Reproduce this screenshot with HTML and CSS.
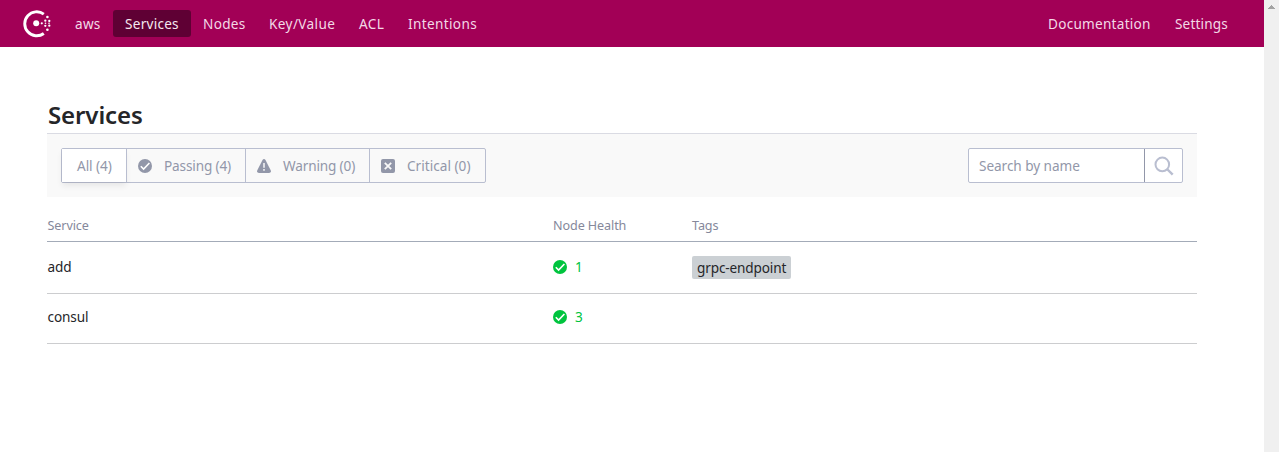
FILE: index.html
```html
<!DOCTYPE html>
<html lang="en">
<head>
<meta charset="utf-8">
<title>Services - Consul</title>
<link rel="stylesheet" href="styles.css">
</head>
<body>
<svg class="sprite" aria-hidden="true">
  <symbol id="check" viewBox="0 0 14 14"><circle cx="7" cy="7" r="7" fill="currentColor"/><path d="M2.8 7.2 5.6 10 11.4 4" fill="none" stroke="#fff" stroke-width="1.6"/></symbol>
</svg>
<div class="app">
  <div class="page">
    <header class="topbar">
      <a class="logo" href="#"><svg width="28" height="28" viewBox="0 0 28 28"><path d="M20.8 4.1A12 12 0 1 0 20.8 23.5" fill="none" stroke="#fff" stroke-width="2.9"/><g fill="#fff"><circle cx="13.2" cy="13.3" r="3"/><circle cx="18.8" cy="13.3" r="1.1"/><circle cx="22.3" cy="10.7" r="1.15"/><circle cx="22.3" cy="15.8" r="1.15"/><circle cx="22.5" cy="13.3" r=".8"/><circle cx="24.4" cy="7" r="1.3"/><circle cx="24.4" cy="19.7" r="1.3"/><circle cx="26.3" cy="11" r="1.15"/><circle cx="26.3" cy="15.7" r="1.15"/><circle cx="26" cy="13.3" r=".8"/></g></svg></a>
      <nav class="menu">
        <a class="link dc" href="#">aws</a>
        <a class="link services active" href="#">Services</a>
        <a class="link nodes" href="#">Nodes</a>
        <a class="link kv" href="#">Key/Value</a>
        <a class="link acl" href="#">ACL</a>
        <a class="link intentions" href="#">Intentions</a>
      </nav>
      <nav class="menu secondary">
        <a class="link docs" href="#">Documentation</a>
        <a class="link settings" href="#">Settings</a>
      </nav>
    </header>
    <main class="content">
      <h1 class="title">Services</h1>
      <form class="filterbar">
        <div class="filters">
          <span class="filter all">All (4)</span>
          <span class="filter passing"><svg class="icon" width="14" height="14"><use href="#check"/></svg>Passing (4)</span>
          <span class="filter warning"><svg class="icon" width="14" height="14" viewBox="0 0 14 14"><path d="M5.5.9Q7-.8 8.5.9L13.8 11.5Q14.3 14 12 14H2Q-.3 14 .2 11.5Z" fill="currentColor"/><path d="M7 4V8.8M7 10V11.8" stroke="#f9f9f9" stroke-width="1.5"/></svg>Warning (0)</span>
          <span class="filter critical"><svg class="icon" width="14" height="14" viewBox="0 0 14 14"><rect width="14" height="14" rx="2" fill="currentColor"/><path d="M3.8 3.8 10.2 10.2M10.2 3.8 3.8 10.2" stroke="#f9f9f9" stroke-width="1.8"/></svg>Critical (0)</span>
        </div>
        <div class="search">
          <span class="query">Search by name</span>
          <span class="search-button"><svg width="20" height="20" viewBox="0 0 20 20" fill="none" stroke="currentColor" stroke-width="2"><circle cx="8.3" cy="8.4" r="6.8"/><path d="M13 13 18.7 18.7" stroke-width="2.4"/></svg></span>
        </div>
      </form>
      <div class="table">
        <div class="row head"><span>Service</span><span>Node Health</span><span>Tags</span></div>
        <div class="row first"><span>add</span><span class="health"><svg width="14" height="14"><use href="#check"/></svg>1</span><span><span class="tag">grpc-endpoint</span></span></div>
        <div class="row"><span>consul</span><span class="health"><svg width="14" height="14"><use href="#check"/></svg>3</span><span></span></div>
      </div>
    </main>
  </div>
  <div class="scrollbar"><svg width="7" height="4" viewBox="0 0 7 4" shape-rendering="crispEdges"><path d="M3 0H4V1H5V2H6V3H7V4H0V3H1V2H2V1H3Z" fill="#a3a3a3"/></svg></div>
</div>
</body>
</html>
```
FILE: styles.css
```css
* { box-sizing: border-box; }
body { margin: 0; background: #fff; color: #252629; font: 13.6px/20px "Noto Sans", sans-serif; overflow: hidden; }
.sprite { display: none; }
svg { display: block; flex: none; }
.app { display: flex; height: 452px; }
.page { flex: 1; }
.scrollbar { width: 15px; background: #f0f0f0; padding: 5px 0 0 4px; }
.topbar { display: flex; align-items: center; height: 47px; padding: 0 24px 0 23px; background: #a20056; }
.logo { width: 40px; }
.menu { display: flex; }
.secondary { margin-left: auto; }
.link { height: 27px; padding: 0 12px; border-radius: 3px; color: #f3d9e6; line-height: 27px; text-decoration: none; white-space: nowrap; letter-spacing: .25px; }
.active { background: #5f0034; color: #f5e9ef; }
.dc { width: 50px; }
.services { width: 78px; }
.nodes { width: 66px; letter-spacing: .3px; }
.kv { width: 90px; letter-spacing: .38px; }
.acl { width: 49px; letter-spacing: .4px; }
.intentions { width: 93px; letter-spacing: .35px; }
.docs { width: 127px; }
.settings { width: 77px; letter-spacing: .15px; }
.content { padding: 51px 67px 0 47px; }
.title { margin: 0; height: 35px; padding-left: 1px; font-size: 24px; line-height: 33px; font-weight: 600; letter-spacing: -.1px; }
.filterbar { display: flex; justify-content: space-between; height: 64px; padding: 14px 14px 0; border-top: 1px solid #dadbe3; background: #f9f9f9; color: #9297a9; }
.filters { display: flex; height: 35px; border: 1px solid #b9bed0; border-radius: 2px; }
.filter { display: flex; align-items: center; white-space: nowrap; border-left: 1px solid #b9bed0; padding-left: 11px; letter-spacing: -.15px; }
.icon { margin-right: 12px; }
.all { width: 64px; padding-left: 15px; border-left: 0; background: #fff; box-shadow: 0 4px 6px rgba(0,0,0,.07); letter-spacing: -.05px; }
.passing { width: 119px; }
.warning { width: 124px; }
.critical { width: 116px; letter-spacing: .02px; }
.search { display: flex; width: 215px; height: 35px; border: 1px solid #b9bed0; border-radius: 2px; background: #fff; }
.query { flex: 1; padding-left: 10px; line-height: 33px; letter-spacing: -.05px; }
.search-button { width: 38px; padding: 7px 0 0 9px; border-left: 1px solid #9297a9; color: #b9bed0; }
.row { display: grid; grid-template-columns: 505.5px 139px 1fr; align-items: center; height: 50px; padding: 0 0 3px .5px; border-bottom: 1px solid #cccdcf; letter-spacing: -.12px; }
.head { height: 45px; padding: 13px 0 0 .5px; border-color: #a3abb8; color: #85889b; font-size: 12.6px; letter-spacing: -.1px; }
.first { height: 52px; padding: 0 0 1px .5px; }
.health { display: flex; align-items: center; gap: 8px; color: #00c43e; }
.tag { display: inline-block; width: 99px; height: 23px; padding-left: 5px; border-radius: 2px; background: #cbd0d4; line-height: 23px; letter-spacing: -.14px; }
```
